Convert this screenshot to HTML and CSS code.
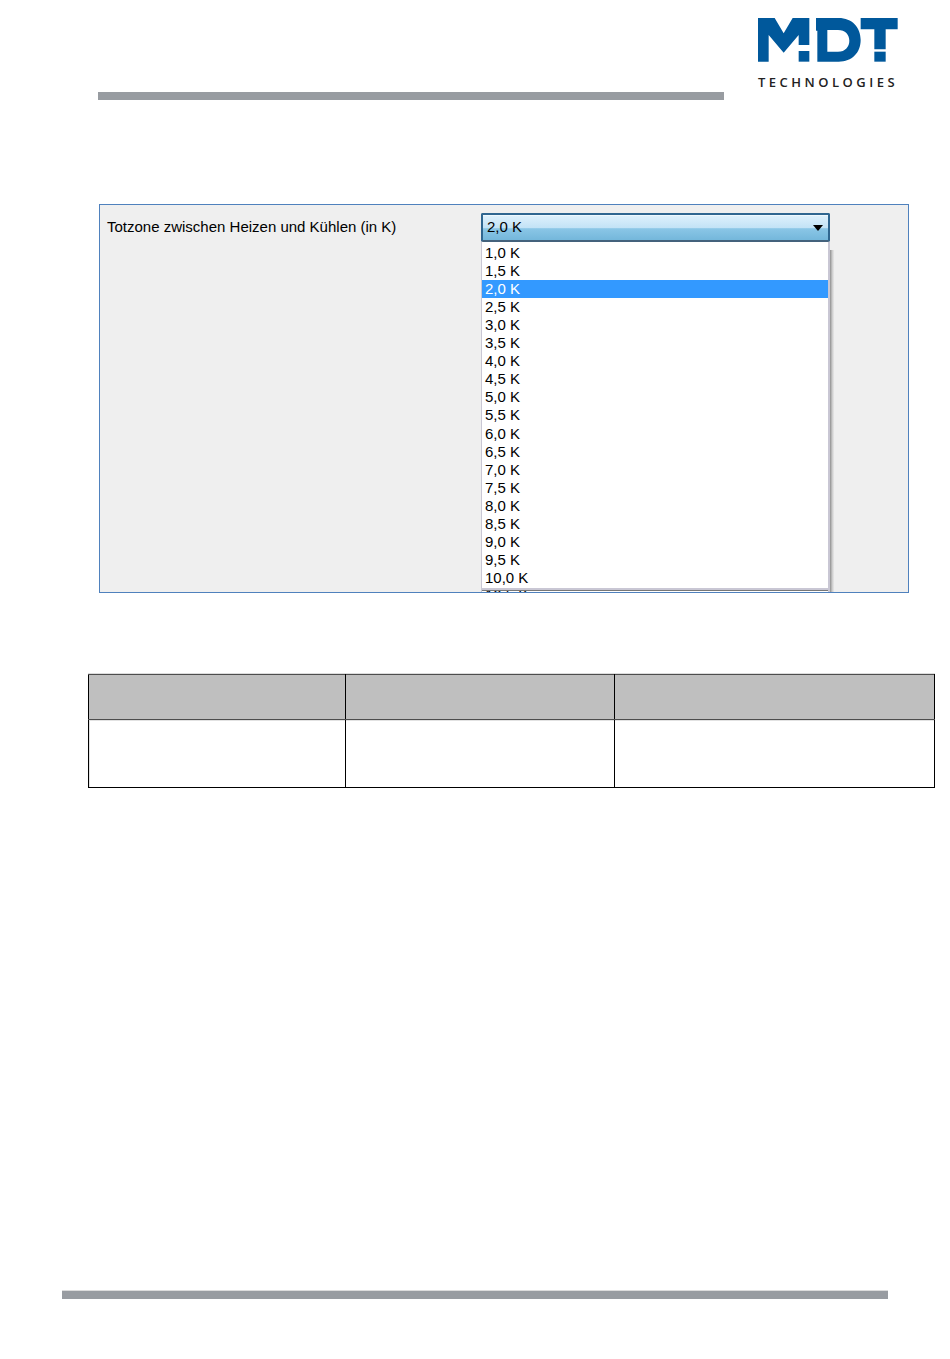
FILE: index.html
```html
<!DOCTYPE html>
<html lang="de">
<head>
    <meta charset="UTF-8">
    <meta name="viewport" content="width=device-width, initial-scale=1.0">
    <title>Totzone</title>
    <link rel="stylesheet" href="styles.css">
</head>
<body>
    <header class="page-header">
        <div class="header-rule"></div>
        <div class="logo">
            <svg class="logo-mark" viewBox="54 54 420 132" aria-hidden="true">
                <path d="M54 54H104L131 100L158 54H208V135H176V105L131 158L86 105V185H54Z"/>
                <rect x="176" y="153" width="32" height="32"/>
                <path fill-rule="evenodd" d="M228 54H296C336 54 362 82 362 120C362 158 336 185 296 185H232V92H228ZM262 90V155H294C316 155 328 140 328 122C328 104 316 90 294 90Z"/>
                <path d="M362 54H473V88H437V148H403V88H362Z"/>
                <rect x="403" y="155" width="34" height="30"/>
            </svg>
            <div class="logo-text">TECHNOLOGIES</div>
        </div>
    </header>

    <!-- Parameter window with the open dropdown -->
    <section class="param-panel">
        <div class="param-label">Totzone zwischen Heizen und Kühlen (in K)</div>
        <div class="combo">
            <div class="combo-box">
                <span>2,0 K</span>
                <span class="combo-arrow"></span>
            </div>
            <ul class="combo-list">
                <li>1,0 K</li>
                <li>1,5 K</li>
                <li class="selected">2,0 K</li>
                <li>2,5 K</li>
                <li>3,0 K</li>
                <li>3,5 K</li>
                <li>4,0 K</li>
                <li>4,5 K</li>
                <li>5,0 K</li>
                <li>5,5 K</li>
                <li>6,0 K</li>
                <li>6,5 K</li>
                <li>7,0 K</li>
                <li>7,5 K</li>
                <li>8,0 K</li>
                <li>8,5 K</li>
                <li>9,0 K</li>
                <li>9,5 K</li>
                <li>10,0 K</li>
                <li class="cut">10,5 K</li>
            </ul>
        </div>
    </section>

    <table class="info-table">
        <colgroup>
            <col class="col-a">
            <col class="col-b">
            <col class="col-c">
        </colgroup>
        <thead>
            <tr>
                <th></th>
                <th></th>
                <th></th>
            </tr>
        </thead>
        <tbody>
            <tr>
                <td></td>
                <td></td>
                <td></td>
            </tr>
        </tbody>
    </table>

    <footer class="page-footer"></footer>
</body>
</html>
```

FILE: styles.css
```css
body {
    margin: 0;
    background-color: white;
    font-family: 'Liberation Sans', Arial, sans-serif;
    color: black;
}

/* Header */
.page-header {
    display: flex;
    align-items: flex-start;
    height: 100px;
    padding-left: 98px;
}

.header-rule {
    width: 626px;
    height: 8px;
    margin-top: 92px;
    background-color: #989ca1;
}

.logo {
    margin-left: 33px;
    padding-top: 18px;
}

.logo-mark {
    display: block;
    width: 140px;
    height: 44px;
    margin-left: 1px;
    fill: #00589b;
}

.logo-text {
    margin-top: 12px;
    margin-left: 1px;
    font-family: 'Open Sans', sans-serif;
    font-size: 13px;
    font-weight: 600;
    line-height: 16px;
    letter-spacing: 3.5px;
    white-space: nowrap;
    color: #222;
}

/* Parameter panel */
.param-panel {
    display: flex;
    box-sizing: border-box;
    width: 810px;
    height: 389px;
    margin: 104px 0 0 99px;
    padding-top: 8px;
    padding-left: 7px;
    overflow: hidden;
    background-color: #efefef;
    border: 1px solid #4f81bd;
}

.param-label {
    width: 374px;
    padding-top: 5px;
    font-size: 15px;
    line-height: 18px;
}

.combo {
    position: relative;
    width: 348px;
}

.combo-box {
    display: flex;
    align-items: center;
    justify-content: space-between;
    box-sizing: border-box;
    height: 29px;
    margin-right: -1px;
    padding: 0 5px 2px 4px;
    font-size: 15px;
    background: linear-gradient(#dff1fc, #c3e3f6 50%, #8ac6e6 55%, #74b7db);
    border: 2px solid #2f6690;
    border-bottom-color: #44627c;
    border-radius: 2px;
    box-shadow: inset 0 1px 0 #eef8fe;
}

.combo-arrow {
    width: 0;
    height: 0;
    margin-top: 2px;
    border-top: 6px solid black;
    border-left: 5px solid transparent;
    border-right: 5px solid transparent;
}

.combo-list {
    position: absolute;
    top: 29px;
    left: 0;
    right: -1px;
    height: 350px;
    margin: 0;
    padding: 2.05px 0 0 0;
    box-sizing: border-box;
    list-style: none;
    background-color: white;
    border-left: 1px solid #c9c7d4;
    border-right: 2px solid #c9c7d4;
    overflow: hidden;
    font-size: 15px;
}

.combo-list::after {
    content: "";
    position: absolute;
    left: 0;
    right: 0;
    top: 346px;
    height: 2px;
    background-color: #c9c7d4;
    border-bottom: 1px solid #777;
}

.combo-list li {
    height: 18.05px;
    padding-left: 3px;
    line-height: 18px;
}

.combo-list li.selected {
    background-color: #3399ff;
    color: white;
}

.combo-list li.cut {
    margin-top: -1px;
}

/* Drop shadow of the list, painted on the panel */
.combo::after {
    content: "";
    position: absolute;
    top: 37px;
    left: 349px;
    width: 4px;
    height: 342px;
    background: linear-gradient(to right, #8f8f8f, #b4b4b4, #d4d4d4, #e8e8e8);
}

/* Table */
.info-table {
    width: 847px;
    margin: 81px 0 0 88px;
    border-collapse: collapse;
    table-layout: fixed;
    box-shadow: 0 -1px 0 #dcdcdc;
}

.col-a {
    width: 257px;
}

.col-b {
    width: 269px;
}

.col-c {
    width: 320px;
}

.info-table th {
    height: 44px;
    padding: 0;
    background-color: #bfbfbf;
    border: 1px solid #4d4d4d;
    border-left-color: black;
    border-right-color: black;
}

.info-table td {
    height: 67px;
    padding: 0;
    border: 1px solid black;
    border-top-color: #4d4d4d;
    box-shadow: inset 0 1px 0 #e2e2e2;
}

.info-table td:first-child {
    box-shadow: inset 1px 1px 0 #e2e2e2;
}

/* Footer */
.page-footer {
    width: 826px;
    height: 8px;
    margin: 503px 0 0 62px;
    background-color: #989ca1;
    box-shadow: 0 -1px 0 #dcdcdc;
}
```
